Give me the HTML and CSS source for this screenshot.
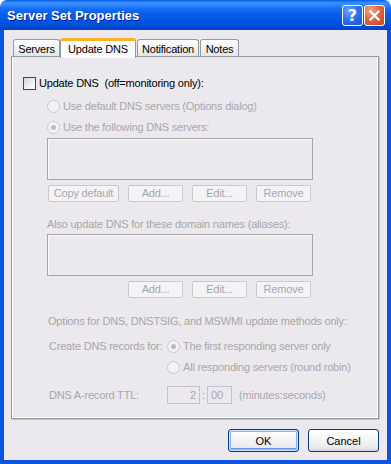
FILE: index.html
```html
<!DOCTYPE html>
<html>
<head>
<meta charset="utf-8">
<title>Server Set Properties</title>
<link rel="stylesheet" href="styles.css">
</head>
<body>
<div class="window">
  <div class="titlebar">
    <span class="title">Server Set Properties</span>
    <div class="caption-btns">
      <span class="cbtn help">?</span>
      <span class="cbtn close"><svg width="13" height="13" viewBox="0 0 13 13"><path d="M2.5 2.5 L10.5 10.5 M10.5 2.5 L2.5 10.5" stroke="#fff" stroke-width="2.2" stroke-linecap="square" fill="none"/></svg></span>
    </div>
  </div>
  <div class="frame">
    <div class="client">
      <div class="tabs">
        <div class="tab t-servers">Servers</div>
        <div class="tab sel t-dns">Update DNS</div>
        <div class="tab t-notif">Notification</div>
        <div class="tab t-notes">Notes</div>
      </div>
      <div class="panel">
        <div class="row r-check"><span class="checkbox"></span><span class="lbl">Update DNS&nbsp; (off=monitoring only):</span></div>
        <div class="row r-radio1"><span class="radio"></span><span class="lbl dis">Use default DNS servers (Options dialog)</span></div>
        <div class="row r-radio2"><span class="radio on"></span><span class="lbl dis">Use the following DNS servers:</span></div>
        <div class="listbox l-1"></div>
        <div class="btnrow b-1">
          <span class="dbtn w-copy">Copy default</span>
          <span class="dbtn">Add...</span>
          <span class="dbtn">Edit...</span>
          <span class="dbtn">Remove</span>
        </div>
        <div class="row r-also"><span class="dis">Also update DNS for these domain names (aliases):</span></div>
        <div class="listbox l-2"></div>
        <div class="btnrow b-2">
          <span class="dbtn">Add...</span>
          <span class="dbtn">Edit...</span>
          <span class="dbtn">Remove</span>
        </div>
        <div class="row r-options"><span class="dis">Options for DNS, DNSTSIG, and MSWMI update methods only:</span></div>
        <div class="row r-create"><span class="dis col-lbl">Create DNS records for:</span><span class="radio on"></span><span class="lbl dis">The first responding server only</span></div>
        <div class="row r-all"><span class="radio"></span><span class="lbl dis">All responding servers (round robin)</span></div>
        <div class="row r-ttl">
          <span class="dis col-lbl">DNS A-record TTL:</span>
          <span class="tbox tb-min">2</span>
          <span class="dis colon">:</span>
          <span class="tbox tb-sec">00</span>
          <span class="dis unit">(minutes:seconds)</span>
        </div>
      </div>
      <div class="footer">
        <button class="btn default">OK</button>
        <button class="btn">Cancel</button>
      </div>
    </div>
  </div>
</div>
</body>
</html>
```

FILE: styles.css
```css
html, body {
  margin: 0;
  padding: 0;
  background: #ffffff;
}
body {
  font-family: "Liberation Sans", Arial, sans-serif;
  font-size: 11px;
  line-height: 13px;
  letter-spacing: -0.2px;
  color: #000;
}
.window {
  width: 391px;
  height: 464px;
  display: flex;
  flex-direction: column;
}
.titlebar {
  flex: none;
  height: 30px;
  box-sizing: border-box;
  border-radius: 7px 7px 0 0;
  background: linear-gradient(to bottom, #0A5CE3 0px, #3C93FF 3px, #2B88FC 5px, #166DF2 9px, #0A5EE8 14px, #0057E4 21px, #004CD8 26px, #0042C8 30px);
  display: flex;
  align-items: center;
  justify-content: space-between;
  padding: 0 6px 0 7px;
}
.title {
  color: #fff;
  font-weight: bold;
  font-size: 13px;
  letter-spacing: 0;
  text-shadow: 1px 1px 0 #0A1C8C;
}
.caption-btns {
  display: flex;
  gap: 1px;
  margin-top: 1px;
}
.cbtn {
  width: 21px;
  height: 21px;
  box-sizing: border-box;
  border: 1px solid #fff;
  border-radius: 3px;
  display: flex;
  align-items: center;
  justify-content: center;
}
.help {
  background: radial-gradient(circle at 30% 25%, #6FA4FF 0%, #2E72F0 45%, #1A56D8 100%);
  color: #fff;
  font-weight: bold;
  font-size: 16px;
  letter-spacing: 0;
  font-family: "DejaVu Sans", "Liberation Sans", sans-serif;
}
.close {
  background: radial-gradient(circle at 30% 25%, #F6A58A 0%, #E5653E 45%, #CC4418 100%);
}
.frame {
  flex: 1;
  display: flex;
  border: 4px solid #0A54E0;
  border-top: 0;
  box-shadow: inset 1px 0 0 #002FB8, inset -1px 0 0 #002FB8, inset 0 -1px 0 #002FB8;
}
.client {
  flex: 1;
  background: #EBE9ED;
  padding: 8px 8px 0 7px;
  display: flex;
  flex-direction: column;
}
.tabs {
  display: flex;
  align-items: flex-end;
  height: 19px;
  padding-left: 2px;
  margin-bottom: -1px;
}
.tab {
  box-sizing: border-box;
  height: 18px;
  border: 1px solid #919B9C;
  border-bottom: 0;
  border-radius: 3px 3px 0 0;
  background: linear-gradient(to bottom, #FFFFFF, #F3F3F5 40%, #E3E2E8);
  display: flex;
  align-items: center;
  justify-content: center;
  padding-top: 1px;
}
.t-servers { width: 47px; }
.t-dns { width: 76px; }
.t-notif { width: 62px; margin-left: 1px; }
.t-notes { width: 39px; margin-left: 1px; }
.tab.sel {
  height: 20px;
  position: relative;
  z-index: 1;
  background: #FCFCFE;
  border-top: 3px solid #F8B32C;
  align-items: flex-start;
  padding-top: 2px;
  margin-bottom: -1px;
}
.panel {
  box-sizing: border-box;
  width: 368px;
  height: 363px;
  border: 1px solid #919B9C;
  box-shadow: inset -1px -1px 0 #FFFFFF, inset 1px 0 0 #FFFFFF, 1px 1px 0 #C8C7CD;
  display: flex;
  flex-direction: column;
}
.row {
  display: flex;
  align-items: center;
  height: 13px;
  white-space: nowrap;
}
.dis { color: #A8A7AB; }
.lbl { margin-left: 3px; }
.checkbox {
  width: 13px;
  height: 13px;
  box-sizing: border-box;
  border: 1px solid #1C5180;
  background: linear-gradient(135deg, #D6D5D9 0%, #F2F2F2 60%, #FFFFFF 100%);
  flex: none;
}
.radio {
  width: 13px;
  height: 13px;
  box-sizing: border-box;
  border: 1px solid #CAC9CD;
  border-radius: 50%;
  background: #F3F2F5;
  flex: none;
  display: flex;
  align-items: center;
  justify-content: center;
}
.radio.on::after {
  content: "";
  width: 5px;
  height: 5px;
  border-radius: 50%;
  background: #BDBCC1;
}
.r-check { margin-top: 20px; padding-left: 11px; }
.r-radio1 { margin-top: 10px; padding-left: 35px; }
.r-radio2 { margin-top: 8px; padding-left: 35px; }
.listbox {
  box-sizing: border-box;
  width: 266px;
  height: 42px;
  margin-left: 35px;
  border: 1px solid #A6A5AA;
  box-shadow: inset 1px 1px 0 #F7F7F9;
  flex: none;
}
.l-1 { margin-top: 4px; }
.l-2 { margin-top: 3px; }
.btnrow {
  display: flex;
  gap: 9px;
  height: 17px;
  flex: none;
}
.b-1 { margin-top: 5px; padding-left: 36px; }
.b-2 { margin-top: 5px; padding-left: 116px; }
.dbtn {
  box-sizing: border-box;
  width: 55px;
  height: 17px;
  border: 1px solid #CAC9CD;
  border-radius: 2px;
  background: #F4F3F6;
  color: #A8A7AB;
  display: flex;
  align-items: center;
  justify-content: center;
}
.dbtn.w-copy { width: 71px; }
.r-also { margin-top: 16px; padding-left: 35px; }
.r-options { margin-top: 17px; padding-left: 36px; }
.r-create { margin-top: 12px; padding-left: 37px; }
.col-lbl { width: 118px; flex: none; }
.r-all { margin-top: 8px; padding-left: 155px; }
.r-ttl { margin-top: 12px; padding-left: 37px; height: 18px; }
.tbox {
  box-sizing: border-box;
  height: 18px;
  border: 1px solid #C4C3C8;
  color: #A8A7AB;
  display: flex;
  align-items: center;
  flex: none;
}
.tb-min { width: 33px; justify-content: flex-end; padding-right: 3px; }
.tb-sec { width: 25px; padding-left: 3px; }
.colon { width: 7px; text-align: center; flex: none; }
.unit { margin-left: 7px; }
.footer {
  display: flex;
  justify-content: flex-end;
  gap: 9px;
  margin-top: 10px;
}
.btn {
  box-sizing: border-box;
  width: 71px;
  height: 23px;
  border: 1px solid #003C74;
  border-radius: 3px;
  background: linear-gradient(to bottom, #FFFFFF 0%, #F6F6F8 40%, #ECEBEF 80%, #D8D6DC 100%);
  font-family: "Liberation Sans", Arial, sans-serif;
  font-size: 11px;
  color: #000;
  padding: 0;
  box-shadow: inset 0 -1px 0 #D6D4DA;
}
.btn.default {
  box-shadow: inset 0 0 0 1px #CEE7FF, inset 0 0 0 2px #8FB4F2, inset 0 -2px 0 1px #6A94E8;
}
```
